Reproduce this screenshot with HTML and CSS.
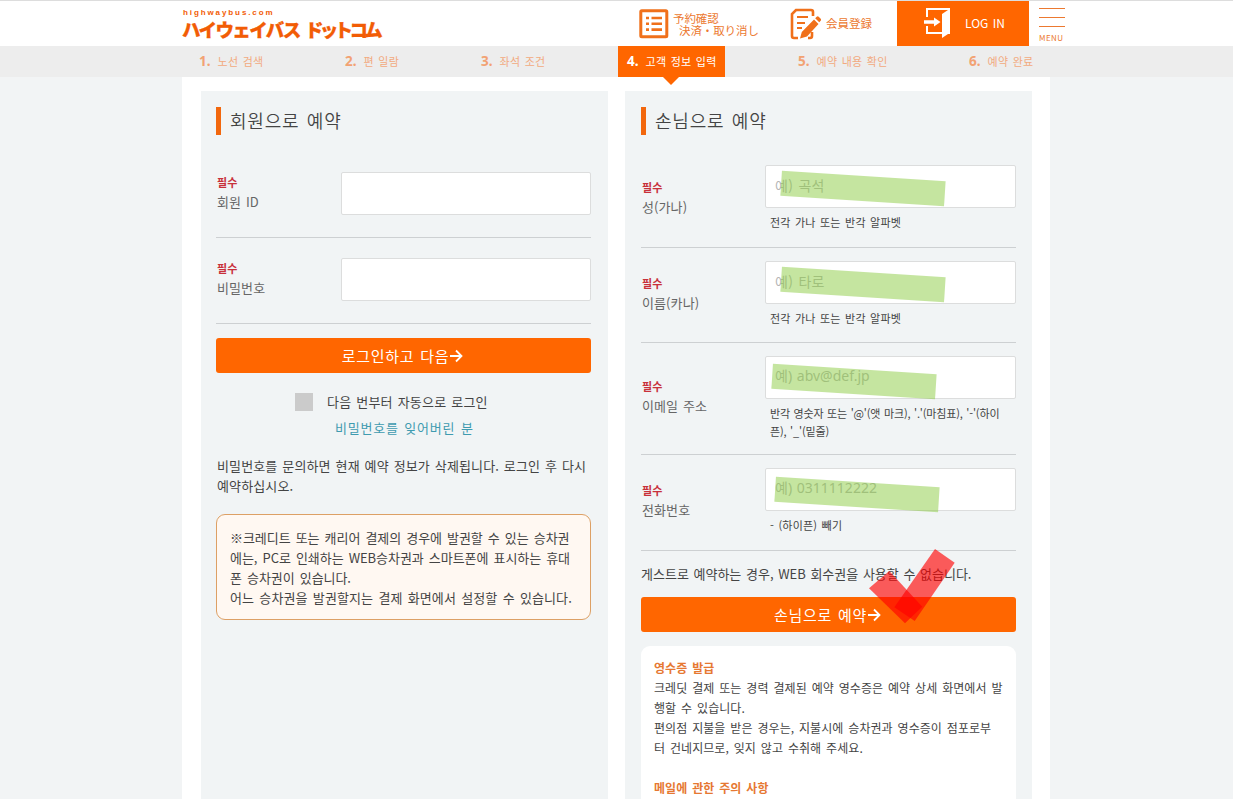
FILE: index.html
```html
<!DOCTYPE html>
<html lang="ko">
<head>
<meta charset="utf-8">
<title>highwaybus.com</title>
<link rel="stylesheet" href="styles.css">
</head>
<body>
<header class="header">
  <div class="header-inner">
    <div class="logo" lang="ja">
      <span class="logo-sub">highwaybus.com</span>
      <span class="logo-main"><span class="logo-a">ハイウェイバス</span><span class="logo-b">ドットコム</span></span>
    </div>
    <a class="nav-check" lang="ja">
      <svg width="30" height="30" viewBox="0 0 30 30" fill="none" stroke="#f0701a"><rect x="1.800" y="1.800" width="26" height="26" rx="1" stroke-width="3"/><path d="M7 9h3M7 14.800h3M7 20.600h3M12.500 9h10.500M12.500 14.800h10.500M12.500 20.600h10.500" stroke-width="2.600"/></svg>
      <span class="nav-lines"><span>予約確認</span><span class="indent">決済・取り消し</span></span>
    </a>
    <a class="nav-join" lang="ja">
      <svg width="31" height="32" viewBox="0 0 31 32"><g fill="none" stroke="#f0701a" stroke-width="2.600"><path d="M23 8V4Q23 2 21 2H6L2 6V28Q2 30 4 30H8"/><path d="M22 24v4Q22 30 20 30H18"/><path d="M7 9h11M7 15h8M7 20h5" stroke-width="2"/></g><path d="M10 30.500l1.800-6.500L24 11.500l4.500 4.500L17 28.500zM25.200 10.200l1.500-1.500q1-.7 2 0l2 2q.8 1 0 2l-1.500 1.600z" fill="#f0701a"/></svg>
      <span>会員登録</span>
    </a>
    <a class="login">
      <svg width="28" height="32" viewBox="0 0 28 32"><path d="M4 10V2H26V26H18M4 19V26H18" fill="none" stroke="#fff" stroke-width="2"/><path d="M19 7l7.500-5v24L19 31z" fill="#fff"/><path d="M1 13.200h10V10.500l6.500 4.500-6.500 4.500v-2.700H1z" fill="#fff"/></svg>
      <span>LOG IN</span>
    </a>
    <a class="menu"><i></i><i></i><i></i><span>MENU</span></a>
  </div>
</header>
<nav class="steps">
  <ol class="steps-inner">
    <li><b>1.</b>노선 검색</li>
    <li><b>2.</b>편 일람</li>
    <li><b>3.</b>좌석 조건</li>
    <li class="active"><b>4.</b>고객 정보 입력</li>
    <li><b>5.</b>예약 내용 확인</li>
    <li><b>6.</b>예약 완료</li>
  </ol>
</nav>
<main class="main">
  <section class="panel left">
    <h2>회원으로 예약</h2>
    <div class="row member">
      <div class="label"><em>필수</em><span>회원 ID</span></div>
      <div class="field"><div class="input"></div></div>
    </div>
    <div class="row member">
      <div class="label"><em>필수</em><span>비밀번호</span></div>
      <div class="field"><div class="input"></div></div>
    </div>
    <a class="button">로그인하고 다음<svg width="13" height="14" viewBox="0 0 13 14"><path d="M0 7h11.500M6 1.500L11.500 7 6 12.500"/></svg></a>
    <div class="auto"><i></i><span>다음 번부터 자동으로 로그인</span></div>
    <a class="forgot">비밀번호를 잊어버린 분</a>
    <p class="inquiry">비밀번호를 문의하면 현재 예약 정보가 삭제됩니다. 로그인 후 다시<br>예약하십시오.</p>
    <p class="ticket-note">※크레디트 또는 캐리어 결제의 경우에 발권할 수 있는 승차권<br>에는, PC로 인쇄하는 WEB승차권과 스마트폰에 표시하는 휴대<br>폰 승차권이 있습니다.<br><span class="last">어느 승차권을 발권할지는 결제 화면에서 설정할 수 있습니다.</span></p>
  </section>
  <section class="panel">
    <h2>손님으로 예약</h2>
    <div class="row">
      <div class="label"><em>필수</em><span>성(가나)</span></div>
      <div class="field"><div class="input">예) 곡석<i class="marker"></i></div><p>전각 가나 또는 반각 알파벳</p></div>
    </div>
    <div class="row short">
      <div class="label"><em>필수</em><span>이름(카나)</span></div>
      <div class="field"><div class="input">예) 타로<i class="marker"></i></div><p>전각 가나 또는 반각 알파벳</p></div>
    </div>
    <div class="row tall">
      <div class="label"><em>필수</em><span>이메일 주소</span></div>
      <div class="field"><div class="input latin">예) abv@def.jp<i class="marker mail"></i></div><p class="mail-hint">반각 영숫자 또는 '@'(앳 마크), '.'(마침표), '-'(하이<br>픈), '_'(밑줄)</p></div>
    </div>
    <div class="row">
      <div class="label"><em>필수</em><span>전화번호</span></div>
      <div class="field"><div class="input latin">예) 0311112222<i class="marker tel"></i></div><p>- (하이픈) 빼기</p></div>
    </div>
    <p class="guest-note">게스트로 예약하는 경우, WEB 회수권을 사용할 수 없습니다.</p>
    <a class="button guest">손님으로 예약<svg width="13" height="14" viewBox="0 0 13 14"><path d="M0 7h11.500M6 1.500L11.500 7 6 12.500"/></svg>
      <svg class="check" width="88" height="78" viewBox="0 0 88 78"><g><path d="M21.300 24l33 35.700L37 76.300 1 41.300z"/><path d="M67 2l19.700 13.700L46.700 74 26.300 60.300z"/></g></svg>
    </a>
    <div class="info">
      <h3>영수증 발급</h3>
      <p>크레딧 결제 또는 경력 결제된 예약 영수증은 예약 상세 화면에서 발<br>행할 수 있습니다.<br>편의점 지불을 받은 경우는, 지불시에 승차권과 영수증이 점포로부<br>터 건네지므로, 잊지 않고 수취해 주세요.</p>
      <h3>메일에 관한 주의 사항</h3>
    </div>
  </section>
</main>
</body>
</html>
```
FILE: styles.css
```css
* { box-sizing: border-box; margin: 0; padding: 0; }
html { height: 799px; overflow: hidden; background: #fff; }
body {
  width: 1233px; height: 799px; overflow: hidden; background: #f2f4f5; color: #444;
  font: 13px/20px "Noto Sans CJK KR", sans-serif;
  letter-spacing: .25px; word-spacing: 1.1px; white-space: nowrap;
}
em, i { font-style: normal; }

.header { height: 46px; background: #fff; border-top: 1px solid #ddd; }
.header-inner { display: flex; width: 883px; height: 45px; margin-left: 182px; font-family: "Noto Sans CJK JP", sans-serif; color: #ec7930; }
.logo { width: 457px; padding-top: 7px; color: #f25c05; }
.logo-sub { display: block; padding-left: 1px; font: bold 8px/9px "Liberation Sans", sans-serif; letter-spacing: 1.9px; }
.logo-main { display: flex; gap: 5px; font-size: 18.5px; line-height: 24px; font-weight: 900; -webkit-text-stroke: .3px #f25c05; }
.logo-a { width: 118px; letter-spacing: -1.6px; }
.logo-b { letter-spacing: -3.7px; }
.nav-check { display: flex; width: 151px; padding-top: 8px; gap: 4px; }
.nav-lines { display: flex; flex-direction: column; padding-top: 3px; font-size: 11.5px; line-height: 12px; letter-spacing: -.1px; }
.indent { padding-left: 6px; }
.nav-join { display: flex; width: 107px; padding-top: 7px; gap: 5px; font-size: 11.5px; line-height: 31px; letter-spacing: 0; }
.login { display: flex; width: 132px; height: 45px; padding: 6px 0 0 26px; gap: 14px; background: #f60; color: #fff; font-size: 12px; line-height: 32px; letter-spacing: 0; }
.menu { display: flex; flex-direction: column; width: 26px; margin-left: 10px; padding-top: 7px; font-size: 8px; line-height: 10px; letter-spacing: .4px; }
.menu i { height: 1px; margin-bottom: 8px; background: #ec7930; }
.menu span { margin-top: -3px; padding-top: 1px; }

.steps { height: 31px; background: #ededed; }
.steps-inner { display: grid; grid-template-columns: 146px 136px 137px 180px 171px 98px; margin-left: 199px; list-style: none; font-size: 11px; line-height: 31px; letter-spacing: .25px; color: #f2aa80; }
.steps b { margin-right: 7px; font: bold 13.500px "Noto Sans", sans-serif; letter-spacing: 0; color: #f2a273; }
.active { position: relative; width: 107px; height: 31px; padding-left: 9px; background: #f60; color: #fff; }
.steps .active b { color: #fff; }
.active::after { content: ""; position: absolute; left: 45px; top: 31px; border: 8px solid transparent; border-top-color: #f60; border-bottom: 0; }

.main { display: grid; grid-template-columns: 407px 407px; gap: 17px; width: 868px; height: 722px; margin-left: 182px; padding: 14px 0 0 19px; background: #fff; }
.panel { height: 708px; padding: 16px 16px 0; background: #f1f4f5; }
.panel.left { padding: 16px 17px 0 15px; }
h2 { height: 28px; margin-bottom: 17px; padding-left: 9px; border-left: 5px solid #f2670d; font-size: 18px; line-height: 27px; font-weight: 350; letter-spacing: .8px; word-spacing: 1.5px; }
.row { display: flex; height: 96px; border-bottom: 1px solid #cdd0d2; }
.row.member { height: 86px; }
.row.short { height: 95px; }
.row.tall { height: 112px; }
.label { display: flex; flex-direction: column; justify-content: center; width: 124px; padding: 0 0 5px 1px; line-height: 19px; letter-spacing: .1px; color: #666; }
.label em { font-size: 11px; font-weight: bold; color: #c8303a; }
.field { width: 251px; padding-top: 13px; }
.member .field { padding: 20px 0 0 1px; }
.input { position: relative; height: 43px; padding-left: 9px; border: 1px solid #dcdddd; border-radius: 2px; background: #fff; color: #b5b5b5; font-size: 14px; line-height: 38px; }
.latin { font-family: "Noto Sans", "Noto Sans CJK KR", sans-serif; letter-spacing: 0; }
.marker { position: absolute; left: 15px; top: 10px; width: 164px; height: 25px; background: rgba(139, 203, 65, .5); transform: rotate(3.700deg); }
.marker.mail { left: 6px; top: 12px; }
.marker.tel { left: 9px; top: 13px; }
.field p { padding: 5px 0 0 5px; font-size: 11px; line-height: 18px; letter-spacing: .2px; }
.field .mail-hint { letter-spacing: -.15px; word-spacing: .7px; }

.button { position: relative; display: flex; justify-content: center; align-items: center; gap: 1px; height: 35px; margin-top: 14px; padding-right: 2px; border-radius: 3px; background: #f60; color: #fff; font-size: 15px; letter-spacing: .7px; }
.button path { fill: none; stroke: #fff; stroke-width: 1.800; }
.button .check { position: absolute; left: 227px; top: -50px; }
.button .check path { fill: #f00; fill-opacity: .63; stroke: none; }
.auto { display: flex; align-items: center; gap: 14px; margin: 19px 0 0 79px; letter-spacing: .2px; }
.auto i { width: 18px; height: 18px; background: #cbcbcb; }
.forgot { display: block; margin-top: 6px; padding-left: 119px; color: #3f9bb0; letter-spacing: .8px; }
.inquiry { margin-top: 18px; padding-left: 1px; letter-spacing: .13px; }
.ticket-note { height: 106px; margin-top: 18px; padding: 13px 0 0 13px; border: 1px solid #dda065; border-radius: 9px; background: #fff8f2; letter-spacing: -.05px; word-spacing: 1.5px; }
.last { letter-spacing: .1px; }
.guest-note { margin-top: 13px; letter-spacing: 0; word-spacing: 1px; }
.button.guest { margin-top: 13px; }
.info { height: 170px; margin-top: 14px; padding: 12px 13px 0; border-radius: 9px 9px 0 0; background: #fff; font-size: 12px; letter-spacing: .05px; word-spacing: 1.5px; }
.info h3 { font-size: 12px; color: #e67832; }
.info p { margin-bottom: 20px; }
```
